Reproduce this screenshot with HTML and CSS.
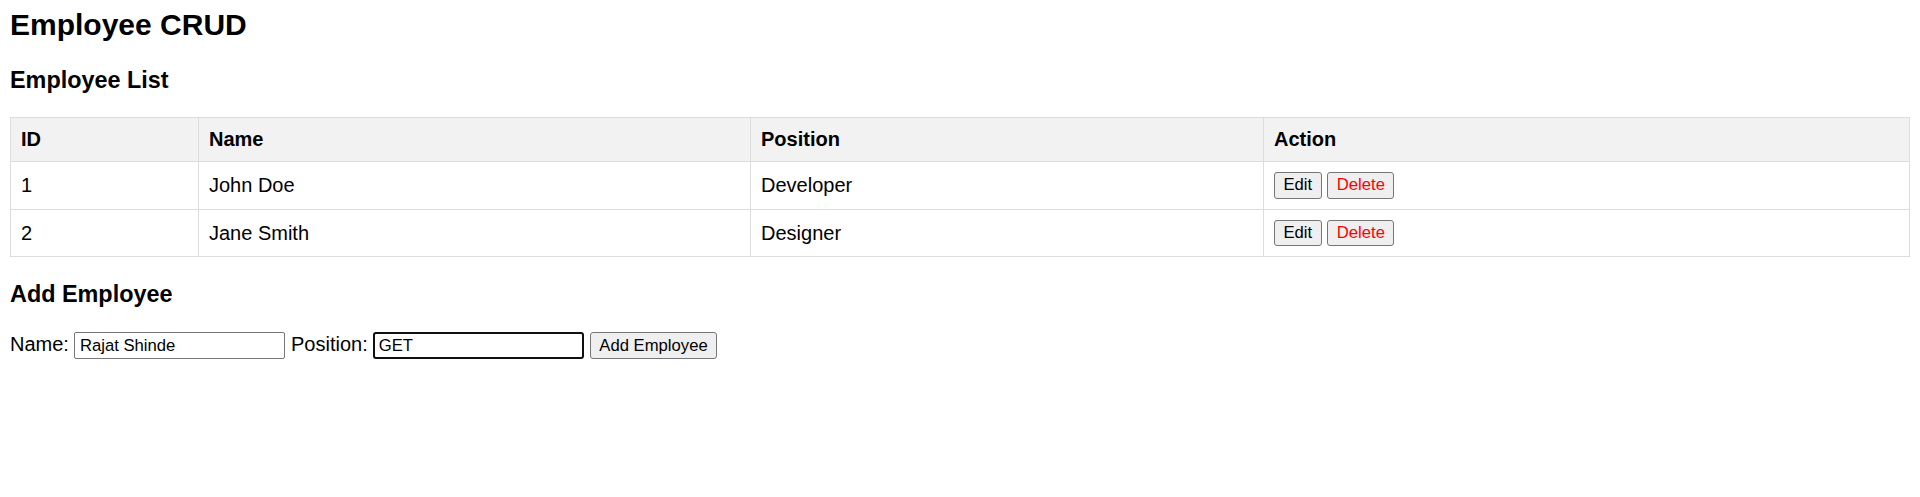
FILE: index.html
```html
<!DOCTYPE html>
<html lang="en">
<head>
<meta charset="utf-8">
<title>Employee CRUD</title>
<link rel="stylesheet" href="styles.css">
</head>
<body>
<div class="app">
  <h1 class="title">Employee CRUD</h1>
  <h3 class="section-title">Employee List</h3>
  <table class="emp-table">
    <colgroup>
      <col class="col-id">
      <col class="col-name">
      <col class="col-position">
      <col class="col-action">
    </colgroup>
    <thead>
      <tr><th>ID</th><th>Name</th><th>Position</th><th>Action</th></tr>
    </thead>
    <tbody>
      <tr>
        <td>1</td><td>John Doe</td><td>Developer</td>
        <td><button class="btn">Edit</button> <button class="btn btn-delete">Delete</button></td>
      </tr>
      <tr>
        <td>2</td><td>Jane Smith</td><td>Designer</td>
        <td><button class="btn">Edit</button> <button class="btn btn-delete">Delete</button></td>
      </tr>
    </tbody>
  </table>
  <h3 class="section-title section-title-form">Add Employee</h3>
  <form class="add-form">
    <label>Name: <input class="field" type="text" value="Rajat Shinde"></label>
    <label>Position: <input class="field field-focused" type="text" value="GET" autofocus></label>
    <button class="btn" type="button">Add Employee</button>
  </form>
</div>
</body>
</html>
```
FILE: styles.css
```css
html, body {
  margin: 0;
  padding: 0;
  background: #fff;
}
body {
  font-family: "Liberation Sans", Arial, sans-serif;
  font-size: 20px;
  color: #000;
}
.app {
  padding: 8px 10px 0;
}
.title {
  font-size: 30px;
  font-weight: bold;
  margin: 0 0 24.5px;
}
.section-title {
  font-size: 23.4px;
  font-weight: bold;
  margin: 23.4px 0;
}
.section-title-form {
  margin-top: 24px;
}
.emp-table {
  width: 100%;
  border-collapse: collapse;
  table-layout: fixed;
}
.col-id { width: 188px; }
.col-name { width: 552px; }
.col-position { width: 513px; }
.emp-table th,
.emp-table td {
  border: 1px solid #ddd;
  padding: 10px;
  text-align: left;
  vertical-align: middle;
}
.emp-table th {
  background: #f2f2f2;
  font-weight: bold;
}
.btn {
  font-family: "Liberation Sans", Arial, sans-serif;
  font-size: 16.67px;
  line-height: normal;
  color: #000;
  background: #efefef;
  border: 1px solid #767676;
  border-radius: 3px;
  padding: 2.4px 8.5px;
  margin: 0;
}
.btn-delete {
  color: #f00;
}
.add-form {
  margin: 0;
  padding-top: 0.5px;
}
.add-form label {
  font-size: 20px;
}
.field {
  font-family: "Liberation Sans", Arial, sans-serif;
  font-size: 16.67px;
  line-height: normal;
  width: 211px;
  box-sizing: border-box;
  padding: 2.4px 4.5px;
  border: 1px solid #767676;
  border-radius: 2px;
  margin: 0;
  color: #000;
  background: #fff;
}
.field-focused,
.field-focused:focus {
  border: 2px solid #101010;
  padding: 1.4px 3.5px;
  border-radius: 3px;
  outline: none;
}
```
